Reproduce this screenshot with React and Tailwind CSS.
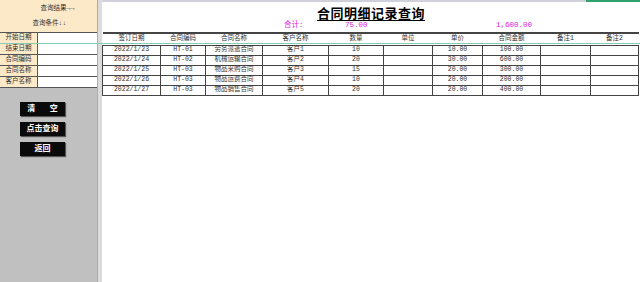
const labels = ["开始日期", "结束日期", "合同编码", "合同名称", "客户名称"];

const headers = ["签订日期", "合同编码", "合同名称", "客户名称", "数量", "单位", "单价", "合同金额", "备注1", "备注2"];
const widths = ["w-[58px]", "w-[45px]", "w-[57px]", "w-[66px]", "w-[55px]", "w-[49px]", "w-[50px]", "w-[58px]", "w-[50px]", "w-[48px]"];

const rows = [
  ["2022/1/23", "HT-01", "劳务派遣合同", "客户1", "10", "", "10.00", "100.00", "", ""],
  ["2022/1/24", "HT-02", "机械运输合同", "客户2", "20", "", "30.00", "600.00", "", ""],
  ["2022/1/25", "HT-03", "物品采购合同", "客户3", "15", "", "20.00", "300.00", "", ""],
  ["2022/1/26", "HT-03", "物品运费合同", "客户4", "10", "", "20.00", "200.00", "", ""],
  ["2022/1/27", "HT-03", "物品销售合同", "客户5", "20", "", "20.00", "400.00", "", ""],
];

const cjk = { fontFamily: '"Liberation Mono", "Noto Sans CJK SC", monospace' };

const BlackButton = ({ children }) => (
  <button className="w-[45px] h-[14px] bg-[#0a0a0a] text-white text-[8px] font-bold leading-none shadow-[1px_1px_1px_#555] flex items-center justify-center">
    {children}
  </button>
);

export default function App() {
  return (
    <div className="relative w-[640px] h-[282px] overflow-hidden bg-white flex text-[#333]" style={cjk}>
      {/* left query panel */}
      <div className="w-[97px] h-full flex flex-col bg-[#c0c0c0]">
        <div className="h-[33px] bg-[#fce9c8] flex flex-col items-center pt-[5px] gap-[7px] text-[6.5px] leading-[8px] border-b border-[#555]">
          <div className="pl-[18px]">查询结果→→</div>
          <div className="pl-[2px]">查询条件↓↓</div>
        </div>
        {labels.map((l) => (
          <div key={l} className="h-[11px] flex border-b border-[#555]">
            <div className="w-[38px] bg-[#fce9c8] border-r border-[#555] text-[6.5px] flex items-center justify-center">{l}</div>
            <div className="flex-1 bg-white"></div>
          </div>
        ))}
        <div className="flex flex-col gap-[6px] pl-[20px] pt-[14px]">
          <BlackButton>清&nbsp;&nbsp;&nbsp;空</BlackButton>
          <BlackButton>点击查询</BlackButton>
          <BlackButton>返回</BlackButton>
        </div>
      </div>
      <div className="w-[1px] h-full bg-[#7cc4ad]"></div>
      <div className="w-[4px] h-full bg-[#dcdcdc]"></div>

      {/* main sheet */}
      <div className="flex-1 h-full flex flex-col border-t-2 border-[#d0d0dc]">
        <div className="h-[17px] flex items-end justify-center">
          <span className="text-[13px] font-bold underline underline-offset-2 tracking-[0.5px] leading-none text-black" style={{ fontFamily: '"Noto Sans CJK SC", sans-serif' }}>
            合同明细记录查询
          </span>
        </div>
        <div className="h-[13px] flex items-center pl-[182px] text-[7.5px] text-[#e020e0]">
          <div className="w-[61px]">合计:</div>
          <div className="w-[151px]">75.00</div>
          <div>1,600.00</div>
        </div>
        <table className="table-fixed border-collapse text-[6.5px] leading-none w-[536px]">
          <thead>
            <tr className="h-[12px] border-t-2 border-[#444]">
              {headers.map((h, i) => (
                <th key={h} className={`${widths[i]} font-normal text-center`}>{h}</th>
              ))}
            </tr>
          </thead>
          <tbody>
            {rows.map((r, ri) => (
              <tr key={ri} className="h-[10px]">
                {r.map((c, ci) => (
                  <td key={ci} className="border border-[#444] text-center p-0">{c}</td>
                ))}
              </tr>
            ))}
          </tbody>
        </table>
      </div>

      {/* freeze pane line and selection marker */}
      <div className="absolute left-0 top-[43px] w-full h-[1px] bg-[#86cdb6]"></div>
      <div className="absolute right-0 top-0 w-[54px] h-[2px] bg-[#2fa36b]"></div>
    </div>
  );
}
